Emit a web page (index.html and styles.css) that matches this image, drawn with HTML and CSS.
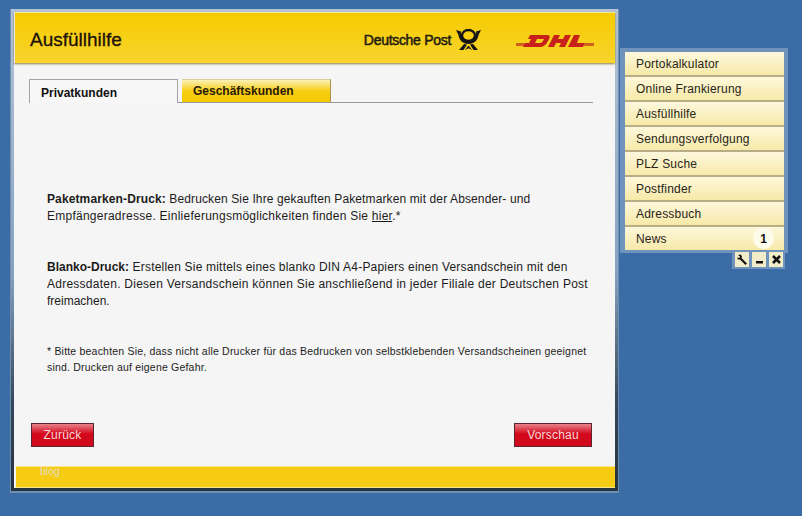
FILE: index.html
```html
<!DOCTYPE html>
<html lang="de">
<head>
<meta charset="utf-8">
<title>Ausfüllhilfe</title>
<link rel="stylesheet" href="styles.css">
</head>
<body>
<main class="window">
  <header class="head">
    <h1 class="title">Ausfüllhilfe</h1>
    <div class="brand">
      <span class="dp">Deutsche Post</span>
      <svg class="horn" width="25" height="22" viewBox="0 0 25 22">
        <path d="M0 1 L5 2.500 C4 7 7 11 12.500 11 C18 11 21 7 20 2.500 L25 1 L22.500 6 C22 11 18 15 12.500 15 C7 15 3 11 2.500 6 Z" fill="#151515"/>
        <ellipse cx="12.500" cy="6.500" rx="6.500" ry="5.500" fill="none" stroke="#151515" stroke-width="2.400"/>
        <path d="M3 21 L8 15 L11 15.500 L7.500 21 Z M22 21 L17 15 L14 15.500 L17.500 21 Z" fill="#151515"/>
        <path d="M9 21 L12 17 L13 17 L16 21 L13 19.500 H12 Z" fill="#151515"/>
      </svg>
      <svg class="dhl" width="78" height="14" viewBox="0 0 78 14">
        <path d="M0 9 H9 L8 12 H0 Z M69 9 H78 V12 H68 Z" fill="#d0601a"/>
        <path d="M14 1 H31 C35 1 34 4 32 7 C30 11 27 13 24 13 H7 L9 9 H13 L15 5 H12 Z M21 5 L19 9 H24 C26 9 27 7 28 5 Z" fill="#c8201a" fill-rule="evenodd"/>
        <path d="M38 1 H44 L42 5 H47 L49 1 H55 L49 13 H43 L45 9 H40 L38 13 H32 Z" fill="#c8201a"/>
        <path d="M58 1 H64 L61 9 H69 L67 13 H52 Z" fill="#c8201a"/>
      </svg>
    </div>
  </header>
  <section class="content">
    <nav class="tabs">
      <a class="tab tab-active">Privatkunden</a>
      <a class="tab tab-other">Geschäftskunden</a>
    </nav>
    <div class="text">
      <p class="p1"><span class="line sp-a"><b>Paketmarken-Druck:</b> Bedrucken Sie Ihre gekauften Paketmarken mit der Absender- und</span>
      <span class="line sp-c">Empfängeradresse. Einlieferungsmöglichkeiten finden Sie <u>hier</u>.*</span></p>
      <p class="p2"><span class="line sp-b"><b>Blanko-Druck:</b> Erstellen Sie mittels eines blanko DIN A4-Papiers einen Versandschein mit den</span>
      <span class="line sp-c">Adressdaten. Diesen Versandschein können Sie anschließend in jeder Filiale der Deutschen Post</span>
      <span class="line">freimachen.</span></p>
      <p class="note"><span class="line sp-b">* Bitte beachten Sie, dass nicht alle Drucker für das Bedrucken von selbstklebenden Versandscheinen geeignet</span>
      <span class="line sp-b">sind. Drucken auf eigene Gefahr.</span></p>
    </div>
    <div class="actions">
      <a class="btn">Zurück</a>
      <a class="btn btn-next">Vorschau</a>
    </div>
  </section>
  <footer class="foot"><span class="blog">blog</span></footer>
</main>
<aside class="panel">
  <ul class="menu">
    <li>Portokalkulator</li>
    <li>Online Frankierung</li>
    <li>Ausfüllhilfe</li>
    <li>Sendungsverfolgung</li>
    <li>PLZ Suche</li>
    <li>Postfinder</li>
    <li>Adressbuch</li>
    <li class="news">News<span class="count">1</span></li>
  </ul>
  <div class="tools">
    <span class="tool"><svg width="13" height="13" viewBox="0 0 13 13"><path d="M2 2 L4.500 1.500 L6 3 L5.500 5 L11 10.500 L9.500 12 L4 6.500 L2 6.500 L1 4.500 L3 5 L4 4 L3.500 3 Z" fill="#111"/></svg></span>
    <span class="tool"><svg width="13" height="13" viewBox="0 0 13 13"><rect x="3" y="8" width="7" height="2.500" fill="#111"/></svg></span>
    <span class="tool"><svg width="13" height="13" viewBox="0 0 13 13"><path d="M3 3 L10 10 M10 3 L3 10" stroke="#111" stroke-width="2.600"/></svg></span>
  </div>
</aside>
</body>
</html>
```
FILE: styles.css
```css
* { box-sizing: border-box; }
html, body { margin: 0; height: 100%; }
body {
  position: relative;
  width: 802px;
  height: 516px;
  overflow: hidden;
  background: #3c6ca5;
  font-family: "Liberation Sans", Arial, sans-serif;
  color: #1c1c1c;
}
.window {
  position: absolute;
  left: 11px;
  top: 9px;
  width: 607px;
  height: 482px;
  display: flex;
  flex-direction: column;
  padding: 3px;
  background: linear-gradient(#b3c4d6, #86a2bf 55%, #33475a 82%, #25323f);
  box-shadow: 0 1px 0 1px #6f8eb0;
}
.head {
  height: 51px;
  flex: none;
  display: flex;
  align-items: center;
  justify-content: space-between;
  padding: 4px 21px 0 15px;
  background: linear-gradient(#f6cb00, #f8d42e);
  box-shadow: 0 1px 2px #8d7d45;
  border-top: 1px solid #f8ea9d;
  border-left: 1px solid #e3e6e8;
  position: relative;
}
.title {
  margin: 0;
  font-size: 19px;
  font-weight: 400;
  color: #20100a;
  -webkit-text-stroke: 0.3px #20100a;
}
.brand { display: flex; align-items: center; }
.dp { font-size: 14px; font-weight: 400; color: #1e1a10; -webkit-text-stroke: .5px #1e1a10; letter-spacing: -.3px; }
.horn { margin-left: 5px; }
.dhl { margin-left: 35px; margin-top: 2px; }
.content {
  flex: 1;
  display: flex;
  flex-direction: column;
  padding: 16px 22px 0 15px;
  background: #f5f5f5;
}
.tabs {
  height: 24px;
  flex: none;
  display: flex;
  gap: 4px;
  align-items: flex-end;
  border-bottom: 1px solid #9a9a9a;
}
.tab {
  font-size: 12px;
  font-weight: 700;
  height: 24px;
  padding: 6px 11px 0;
  color: #1b1208;
}
.tab-active {
  width: 149px;
  height: 24px;
  background: #f7f7f7;
  border: 1px solid #a5a5a5;
  border-bottom: 0;
  margin-bottom: -1px;
  color: #111;
}
.tab-other {
  width: 149px;
  height: 23px;
  padding: 4px 11px 0;
  color: #2a1a05;
  background: linear-gradient(#fbf1b7, #f6cd12 50%, #f6c900);
  border-right: 1px solid #a59350;
  border-top: 1px solid #d8cf9c;
}
.text { padding: 0 0 0 18px; font-size: 12px; line-height: 17px; }
.text p { margin: 0; }
.line { display: block; white-space: nowrap; }
.sp-a { letter-spacing: .12px; }
.sp-b { letter-spacing: .2px; }
.sp-b b { letter-spacing: 0; }
.sp-c { letter-spacing: .25px; }
.p1 { padding-top: 88px; }
.p2 { padding-top: 34px; }
.note { padding-top: 33px; font-size: 10.500px; line-height: 16px; }
.actions {
  margin-top: auto;
  margin-bottom: 19px;
  display: flex;
  justify-content: space-between;
  padding: 0 1px 0 2px;
}
.btn {
  width: 63px;
  height: 24px;
  display: flex;
  align-items: center;
  justify-content: center;
  font-size: 12px;
  letter-spacing: .2px;
  color: #f6dada;
  background: linear-gradient(#e8828a, #d4081c 45%, #cf0a1c);
  border: 1px solid #5c2430;
}
.btn-next { width: 78px; }
.foot {
  height: 22px;
  flex: none;
  background: #f6cb14;
  border-top: 1px solid #fae68a;
  border-bottom: 1px solid #fbe58a;
  border-left: 2px solid #f5f5f5;
  padding-left: 24px;
}
.blog { font-size: 10.500px; color: #e2dcc0; line-height: 9px; display: block; }
.panel {
  position: absolute;
  left: 620px;
  top: 48px;
  width: 168px;
  height: 205px;
  background: #6f93ba;
  padding: 4px 4px 0 5px;
}
.menu { list-style: none; margin: 0; padding: 0; }
.menu li {
  height: 25px;
  padding-left: 11px;
  display: flex;
  align-items: center;
  justify-content: space-between;
  font-size: 12px;
  letter-spacing: .2px;
  color: #28241a;
  background: linear-gradient(#fdf8dc, #f7e9a8);
  border-bottom: 2px solid #b7ad87;
}
.menu li.news { border-bottom: 0; height: 23px; padding-right: 10px; }
.count {
  width: 21px;
  height: 21px;
  border-radius: 50%;
  background: #fdfbea;
  display: flex;
  align-items: center;
  justify-content: center;
  font-weight: 700;
  letter-spacing: 0;
  color: #111;
}
.tools {
  position: absolute;
  right: 3px;
  top: 204px;
  display: flex;
  gap: 3px;
  padding: 0 2px 2px 3px;
  background: #6f93ba;
}
.tool {
  width: 14px;
  height: 15px;
  background: #f3ecc8;
  display: flex;
  align-items: center;
  justify-content: center;
}
```
